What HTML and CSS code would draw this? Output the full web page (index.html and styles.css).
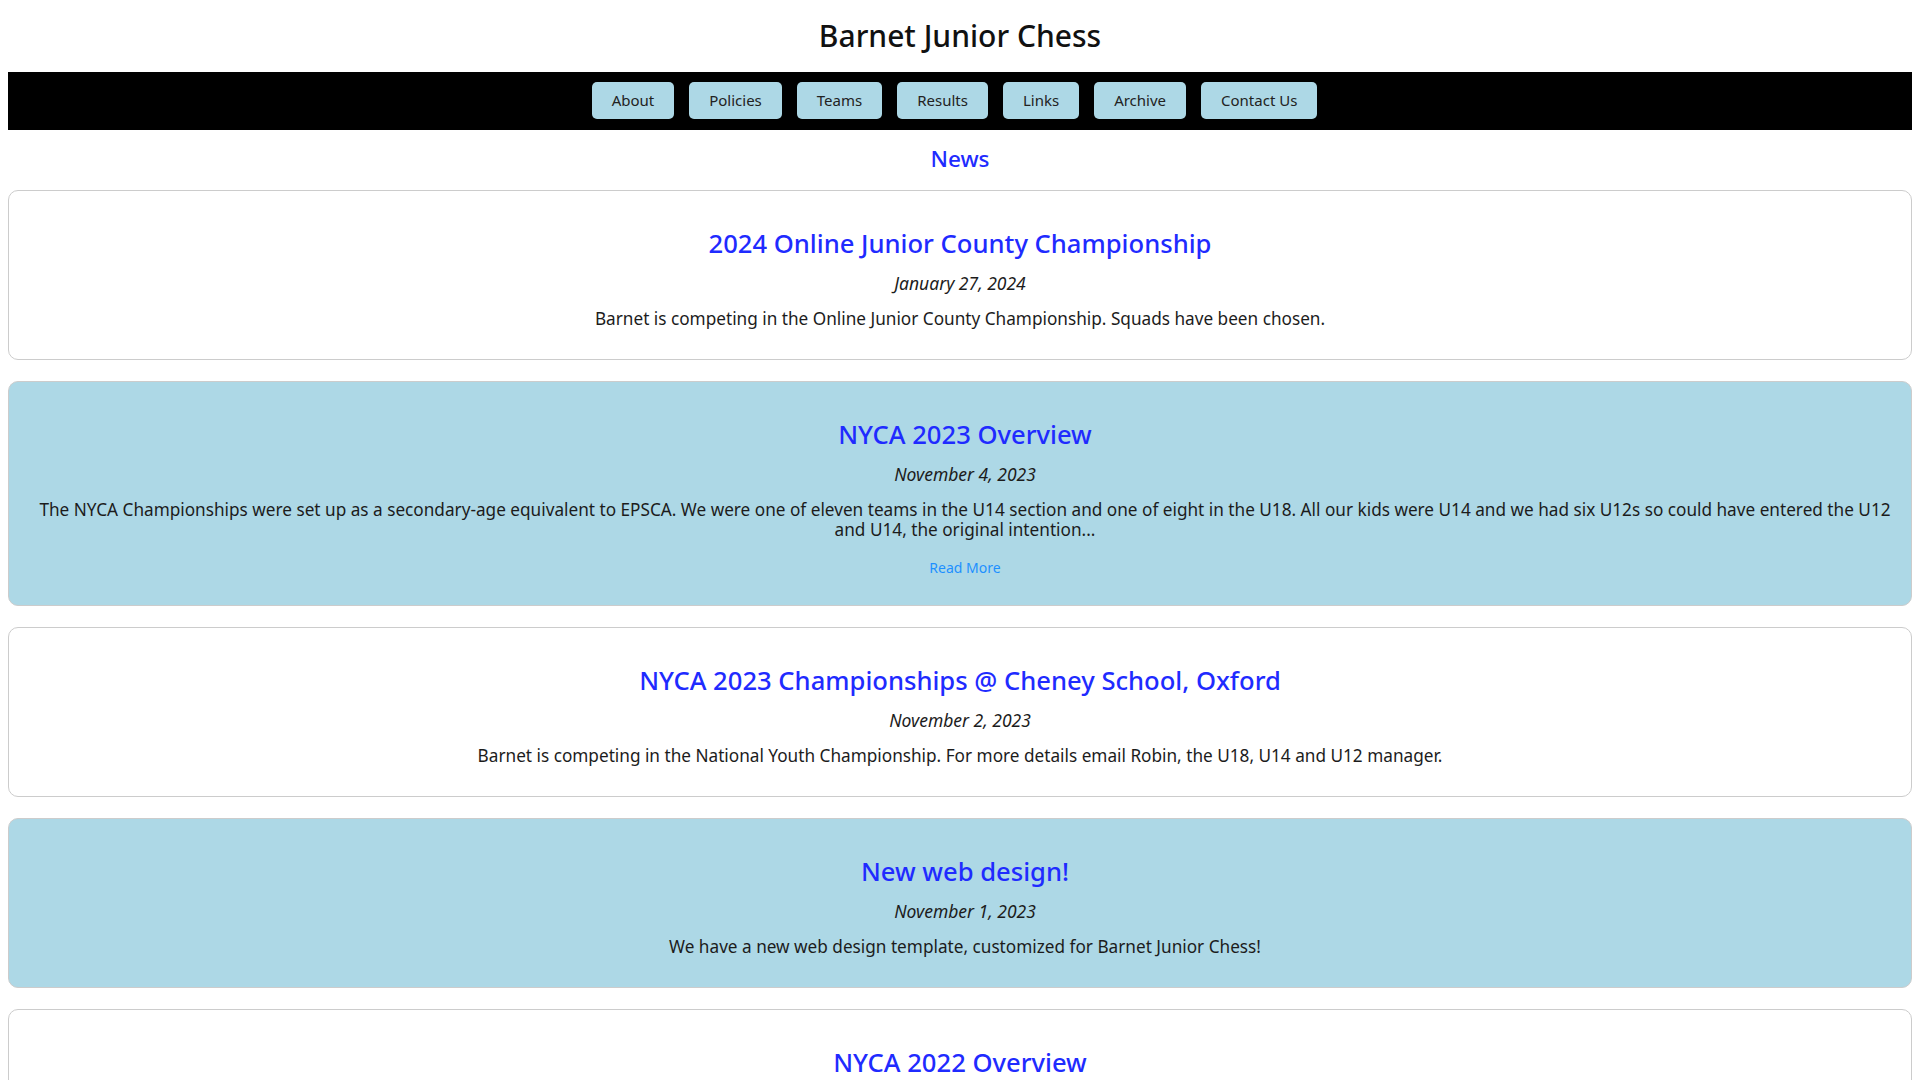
FILE: index.html
```html
<!DOCTYPE html>
<html lang="en">
<head>
<meta charset="utf-8">
<title>Barnet Junior Chess</title>
<link rel="stylesheet" href="styles.css">
</head>
<body>
<header class="site-header">
  <h1 class="site-title">Barnet Junior Chess</h1>
</header>
<nav class="main-nav">
  <a class="nav-btn" href="#">About</a>
  <a class="nav-btn" href="#">Policies</a>
  <a class="nav-btn" href="#">Teams</a>
  <a class="nav-btn" href="#">Results</a>
  <a class="nav-btn" href="#">Links</a>
  <a class="nav-btn" href="#">Archive</a>
  <a class="nav-btn" href="#">Contact Us</a>
</nav>
<main class="news">
  <h2 class="news-heading">News</h2>
  <article class="card">
    <h3 class="card-title">2024 Online Junior County Championship</h3>
    <p class="card-date">January 27, 2024</p>
    <p class="card-text">Barnet is competing in the Online Junior County Championship. Squads have been chosen.</p>
  </article>
  <article class="card card-alt">
    <h3 class="card-title">NYCA 2023 Overview</h3>
    <p class="card-date">November 4, 2023</p>
    <p class="card-text">The NYCA Championships were set up as a secondary-age equivalent to EPSCA. We were one of eleven teams in the U14 section and one of eight in the U18. All our kids were U14 and we had six U12s so could have entered the U12 and U14, the original intention...</p>
    <a class="read-more" href="#">Read More</a>
  </article>
  <article class="card">
    <h3 class="card-title">NYCA 2023 Championships @ Cheney School, Oxford</h3>
    <p class="card-date">November 2, 2023</p>
    <p class="card-text">Barnet is competing in the National Youth Championship. For more details email Robin, the U18, U14 and U12 manager.</p>
  </article>
  <article class="card card-alt">
    <h3 class="card-title">New web design!</h3>
    <p class="card-date">November 1, 2023</p>
    <p class="card-text">We have a new web design template, customized for Barnet Junior Chess!</p>
  </article>
  <article class="card">
    <h3 class="card-title">NYCA 2022 Overview</h3>
    <p class="card-date">October 30, 2022</p>
    <p class="card-text">Barnet entered teams in the NYCA Championships.</p>
  </article>
</main>
</body>
</html>
```
FILE: styles.css
```css
html, body {
  background: #ffffff;
}
body {
  margin: 8px;
  font-family: "Noto Sans", "DejaVu Sans", sans-serif;
  color: #1c1c1c;
  font-size: 17px;
}
.site-header {
  padding: 10px 0 18px;
  text-align: center;
}
.site-title {
  margin: 0;
  font-size: 30px;
  line-height: 36px;
  font-weight: 500;
  color: #111111;
}
.main-nav {
  background: #000000;
  display: flex;
  justify-content: center;
  gap: 15px;
  padding: 10px 11px 11px 0;
}
.nav-btn {
  display: block;
  background: #add8e6;
  color: #222222;
  text-decoration: none;
  font-size: 15px;
  line-height: 37px;
  height: 37px;
  padding: 0 20px;
  border-radius: 5px;
}
.news {
  display: flex;
  flex-direction: column;
  gap: 21px;
}
.news-heading {
  margin: 17px 0 -2px;
  text-align: center;
  font-size: 22.5px;
  line-height: 24px;
  font-weight: 500;
  color: #1f2bff;
}
.card {
  border: 1px solid #cccccc;
  border-radius: 10px;
  padding: 20px;
  text-align: center;
  background: #ffffff;
}
.card-alt {
  background: #add8e6;
  padding-left: 30px;
  padding-right: 20px;
}
.card-title {
  margin: 18px 0 0;
  font-size: 25.6px;
  line-height: 29px;
  font-weight: 500;
  color: #1f2bff;
}
.card-date {
  margin: 16px 0 0;
  font-style: italic;
  font-size: 17.5px;
  line-height: 19px;
}
.card-text {
  margin: 16px 0 10px;
  font-size: 17.2px;
  line-height: 20px;
}
.read-more {
  display: block;
  margin: 20px 0 9px;
  font-size: 14px;
  line-height: 16px;
  color: #1e90ff;
  text-decoration: none;
}
```
